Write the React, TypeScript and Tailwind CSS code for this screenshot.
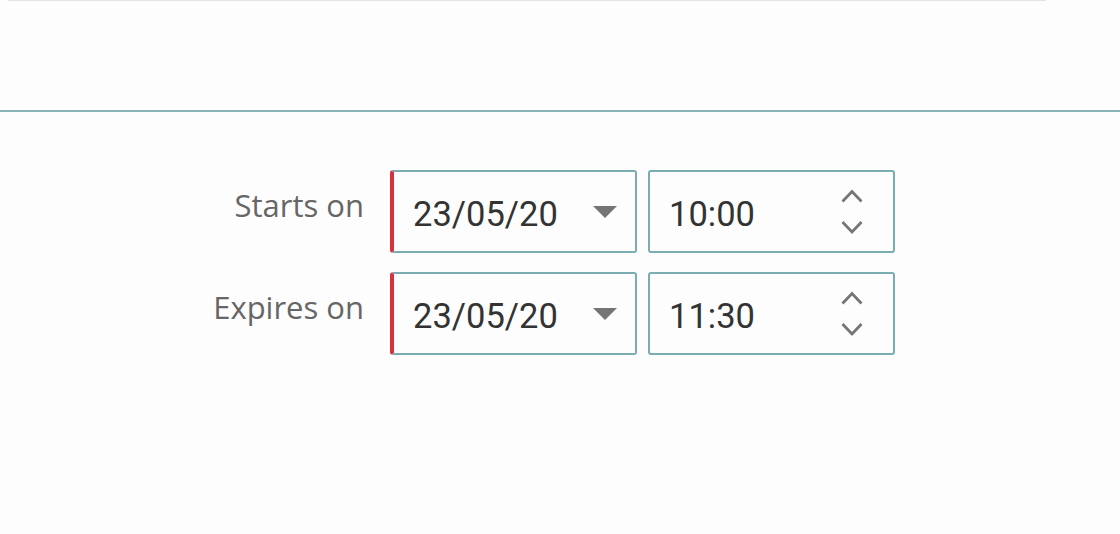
import React from "react";

type Row = { label: string; date: string; time: string };

const rows: Row[] = [
	{ label: "Starts on", date: "23/05/20", time: "10:00" },
	{ label: "Expires on", date: "23/05/20", time: "11:30" },
];

const Caret: React.FC = () => (
	<svg width="24" height="12" viewBox="0 0 24 12" className="shrink-0">
		<polygon points="0,0 24,0 12,12" fill="#757575" />
	</svg>
);

const Spinner: React.FC = () => (
	<svg width="22" height="46" viewBox="0 0 22 46" className="shrink-0">
		<polyline
			points="1.5,12.5 11,2.5 20.5,12.5"
			fill="none"
			stroke="#757575"
			strokeWidth="2.8"
		/>
		<polyline
			points="1.5,33 11,43 20.5,33"
			fill="none"
			stroke="#757575"
			strokeWidth="2.8"
		/>
	</svg>
);

const App: React.FC = () => {
	return (
		<div className="h-[534px] w-full overflow-hidden bg-[#fdfdfd]">
			<div className="ml-[8px] mr-[74px] h-px bg-[#e4e4e4]" />
			<div className="h-[109px]" />
			<div className="h-[2px] bg-[#8ab4b8]" />
			<div className="pt-[58px]">
				<div className="grid grid-cols-[379px_247px_247px] gap-x-[11px] gap-y-[19px]">
					{rows.map((row) => (
						<React.Fragment key={row.label}>
							<div className="flex items-center justify-end pr-[15px] pb-[12px] font-['Open_Sans',sans-serif] text-[31px] text-[#666666]">
								{row.label}
							</div>
							<div className="flex h-[83px] items-center justify-between rounded-[3px] border-2 border-l-4 border-[#7aadb2] border-l-[#d8313f] pl-[19px] pr-[18px]">
								<span className="pt-[6px] font-['Roboto',sans-serif] text-[34.5px] text-[#333333]">
									{row.date}
								</span>
								<Caret />
							</div>
							<div className="flex h-[83px] items-center justify-between rounded-[3px] border-2 border-[#7aadb2] pl-[19px] pr-[30px]">
								<span className="pt-[6px] font-['Roboto',sans-serif] text-[34.5px] text-[#333333]">
									{row.time}
								</span>
								<Spinner />
							</div>
						</React.Fragment>
					))}
				</div>
			</div>
		</div>
	);
};

export default App;
